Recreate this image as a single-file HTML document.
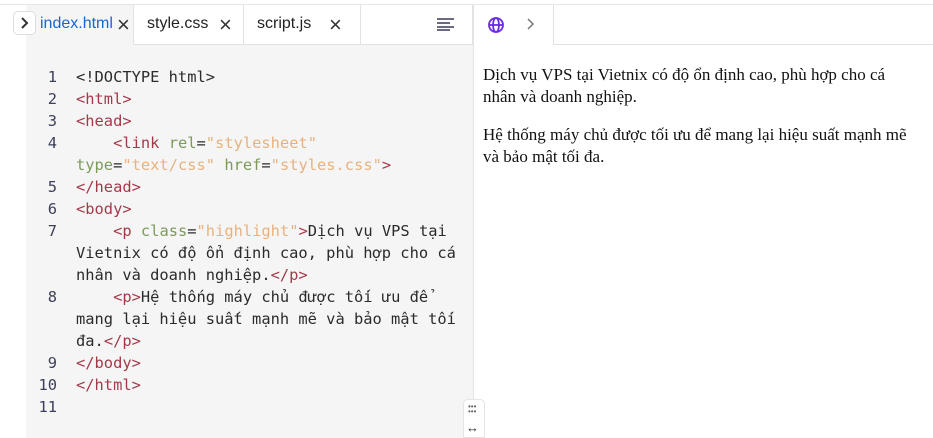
<!DOCTYPE html>
<html><head><style>
*{margin:0;padding:0;box-sizing:border-box}
body{width:933px;height:438px;background:#fff;position:relative;overflow:hidden;font-family:"Liberation Sans",sans-serif}
.topline{position:absolute;left:0;right:0;top:4px;height:1px;background:#e6e6e6}
.editor{position:absolute;left:26px;top:5px;width:448px;height:433px;background:#f5f5f5;border-right:1px solid #e4e4e4}
.tabs{position:absolute;left:0;top:0;width:447px;height:40px;}
.tab{position:absolute;top:0;height:40px;font-size:16px;color:#222;line-height:37px;padding-left:13px}
.t2,.t3,.t4{background:#fff;border-left:1px solid #e2e2e2;border-bottom:1px solid #e2e2e2}
.x{position:absolute;font-size:22px;color:#333;top:1px;font-weight:300}
.code{position:absolute;left:0;top:61px;font-family:"DejaVu Sans Mono","Liberation Mono",monospace;font-size:15.4px;color:#2b2b2b}
.l{height:22px;line-height:22px;white-space:pre;position:relative;padding-left:50px}
.n{position:absolute;left:0;width:31px;text-align:right;color:#3c3f5a}
.t{color:#a33a4a}.a{color:#7d9a5a}.s{color:#e8b27e}
.prev{position:absolute;left:483px;top:64px;width:426px;font-family:"Liberation Serif",serif;font-size:17px;line-height:22px;color:#111}
.prev p{margin-bottom:16px}
</style></head><body>
<div class="topline"></div>
<div class="editor">
 <div class="tabs">
  <div class="tab" style="left:0;width:107px;color:#1a66d0;padding-left:14px">index.html<span class="x" style="left:91px">×</span></div>
  <div class="tab t2" style="left:107px;width:110px">style.css<span class="x" style="left:85px">×</span></div>
  <div class="tab t3" style="left:217px;width:117px">script.js<span class="x" style="left:85px">×</span></div>
  <div class="tab t4" style="left:334px;width:113px;border-right:1px solid #e2e2e2">
   <svg style="position:absolute;left:76px;top:13px" width="18" height="13"><g stroke="#6a6a80" stroke-width="2"><line x1="0" y1="1" x2="17" y2="1"/><line x1="0" y1="5" x2="13" y2="5"/><line x1="0" y1="9" x2="17" y2="9"/><line x1="0" y1="12" x2="13" y2="12"/></g></svg>
  </div>
 </div>
 <div class="code">
  <div class="l"><span class="n">1</span>&lt;!DOCTYPE html&gt;</div>
  <div class="l"><span class="n">2</span><span class="t">&lt;html&gt;</span></div>
  <div class="l"><span class="n">3</span><span class="t">&lt;head&gt;</span></div>
  <div class="l"><span class="n">4</span>    <span class="t">&lt;link</span> <span class="a">rel</span>=<span class="s">"stylesheet"</span></div>
  <div class="l"><span class="a">type</span>=<span class="s">"text/css"</span> <span class="a">href</span>=<span class="s">"styles.css"</span><span class="t">&gt;</span></div>
  <div class="l"><span class="n">5</span><span class="t">&lt;/head&gt;</span></div>
  <div class="l"><span class="n">6</span><span class="t">&lt;body&gt;</span></div>
  <div class="l"><span class="n">7</span>    <span class="t">&lt;p</span> <span class="a">class</span>=<span class="s">"highlight"</span><span class="t">&gt;</span>Dịch vụ VPS tại</div>
  <div class="l">Vietnix có độ ổn định cao, phù hợp cho cá</div>
  <div class="l">nhân và doanh nghiệp.<span class="t">&lt;/p&gt;</span></div>
  <div class="l"><span class="n">8</span>    <span class="t">&lt;p&gt;</span>Hệ thống máy chủ được tối ưu để</div>
  <div class="l">mang lại hiệu suất mạnh mẽ và bảo mật tối</div>
  <div class="l">đa.<span class="t">&lt;/p&gt;</span></div>
  <div class="l"><span class="n">9</span><span class="t">&lt;/body&gt;</span></div>
  <div class="l"><span class="n">10</span><span class="t">&lt;/html&gt;</span></div>
  <div class="l"><span class="n">11</span></div>
 </div>
</div>
<div style="position:absolute;left:13px;top:11px;width:23px;height:24px;background:#fff;border:1px solid #ddd;border-radius:5px">
 <svg width="21" height="22"><path d="M8 6l5 5-5 5" stroke="#333" stroke-width="2" fill="none"/></svg>
</div>
<svg style="position:absolute;left:487px;top:16px" width="18" height="18"><g stroke="#6a2be0" stroke-width="1.8" fill="none"><circle cx="9" cy="9" r="7"/><ellipse cx="9" cy="9" rx="3" ry="7"/><line x1="2" y1="9" x2="16" y2="9"/></g></svg>
<svg style="position:absolute;left:526px;top:17px" width="10" height="14"><path d="M2 2l5 5-5 5" stroke="#777" stroke-width="1.5" fill="none"/></svg>
<div style="position:absolute;left:553px;top:5px;right:0;height:40px;border-left:1px solid #e2e2e2;border-bottom:1px solid #e2e2e2"></div>
<div style="position:absolute;left:463px;top:399px;width:22px;height:39px;background:#fff;border:1px solid #e4e4e4;border-radius:5px 5px 0 0">
 <div style="position:absolute;left:4px;top:4px;font-size:8px;color:#666;line-height:5px">•••<br>•••</div>
 <div style="position:absolute;left:2px;top:20px;font-size:13px;color:#333">↔</div>
</div>
<div class="prev">
 <p>Dịch vụ VPS tại Vietnix có độ ổn định cao, phù hợp cho cá nhân và doanh nghiệp.</p>
 <p>Hệ thống máy chủ được tối ưu để mang lại hiệu suất mạnh mẽ và bảo mật tối đa.</p>
</div>
</body></html>
